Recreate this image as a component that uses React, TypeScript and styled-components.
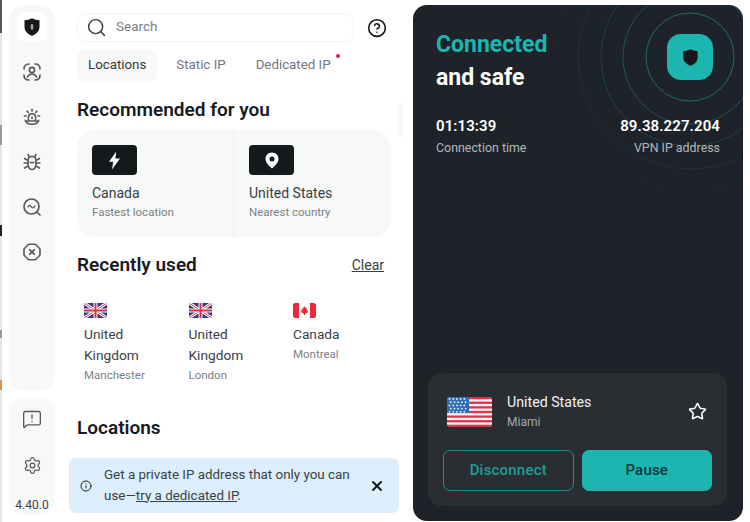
import { Search, CircleHelp, Info, X, Star, Settings, MessageSquareWarning } from "lucide-react";
import styled, { createGlobalStyle } from "styled-components";

const Global = createGlobalStyle`
	html, body {
		margin: 0;
		padding: 0;
		background: #fff;
	}
	body {
		font-family: Roboto, "Liberation Sans", sans-serif;
		color: #1a1e22;
	}
`;

const Page = styled.div`
	width: 750px;
	height: 522px;
	display: flex;
	overflow: hidden;
	background: #fff;
`;

// sliver of the window behind the app, visible along the left edge
const WindowEdge = styled.div`
	width: 2px;
	flex-shrink: 0;
	background: linear-gradient(
		to bottom,
		#555 0, #555 33px,
		#e4e4e4 33px, #e4e4e4 125px,
		#999 125px, #999 145px,
		#dfe8e4 145px, #e4e4e4 225px,
		#222 225px, #222 236px,
		#e4e4e4 236px, #e4e4e4 330px,
		#999 330px, #999 338px,
		#e4e4e4 338px, #e4e4e4 380px,
		#d9924f 380px, #d9924f 390px,
		#e4e4e4 390px
	);
`;

const Sidebar = styled.aside`
	width: 44px;
	margin: 5px 0 7px 8px;
	display: flex;
	flex-direction: column;
	gap: 8px;
	flex-shrink: 0;
`;

const SideCard = styled.div`
	background: #f7f8f8;
	border-radius: 14px;
	box-sizing: border-box;
	display: flex;
	flex-direction: column;
	align-items: center;
`;

const NavCard = styled(SideCard)`
	height: 385px;
	padding-top: 7px;
	gap: 15px;
`;

const FootCard = styled(SideCard)`
	flex: 1;
	padding-top: 10px;
	color: #3d4247;
`;

const NavItem = styled.div<{ $active?: boolean }>`
	width: 30px;
	height: 30px;
	border-radius: 8px;
	display: flex;
	align-items: center;
	justify-content: center;
	color: #55595e;
	background: ${(props) => (props.$active ? "#fff" : "transparent")};
`;

const FootIcon = styled.div`
	height: 22px;
	margin-bottom: 24px;
	display: flex;
	align-items: center;
	color: #55595e;
`;

const Version = styled.div`
	font-size: 12px;
	line-height: 14px;
	margin-top: -2px;
`;

const Main = styled.main`
	width: 336px;
	margin-left: 15px;
	flex-shrink: 0;
	position: relative;
	padding: 13px 0 0 8px;
	box-sizing: border-box;
	overflow: hidden;
`;

const ScrollThumb = styled.div`
	position: absolute;
	left: 329px;
	top: 103px;
	width: 5px;
	height: 34px;
	border-radius: 3px;
	background: #f7f7f7;
`;

const SearchRow = styled.div`
	display: flex;
	align-items: center;
	gap: 13px;
`;

const SearchBox = styled.div`
	width: 277px;
	height: 29px;
	box-sizing: border-box;
	border: 1px solid #f2f3f3;
	border-radius: 9px;
	display: flex;
	align-items: center;
	gap: 9px;
	padding-left: 8px;
	font-size: 13.5px;
	color: #7a7f84;
`;

const SearchLabel = styled.span`
	margin-top: -3px;
`;

const Tabs = styled.div`
	display: flex;
	margin-top: 8px;
	gap: 8px;
`;

const Tab = styled.div<{ $active?: boolean }>`
	height: 32px;
	padding: 0 11px 3px;
	box-sizing: border-box;
	border-radius: 8px;
	display: flex;
	align-items: center;
	position: relative;
	font-size: 13.3px;
	color: ${(props) => (props.$active ? "#33383d" : "#72777c")};
	background: ${(props) => (props.$active ? "#f7f8f8" : "transparent")};
`;

const Dot = styled.span`
	position: absolute;
	top: 4px;
	right: 2px;
	width: 4px;
	height: 4px;
	border-radius: 50%;
	background: #e0263f;
`;

const Heading = styled.h2`
	margin: 0;
	font-size: 19px;
	line-height: 24px;
	font-weight: 600;
	color: #171b1f;
`;

const RecommendedHeading = styled(Heading)`
	margin-top: 16px;
`;

const RecCard = styled.div`
	width: 314px;
	height: 107px;
	margin-top: 8px;
	background: #f7f8f8;
	border-radius: 18px;
	display: flex;
`;

const RecItem = styled.div`
	flex: 1;
	padding: 15px 0 0 15px;
	&:first-child {
		flex: none;
		width: 156px;
		box-sizing: border-box;
	}
	& + & {
		border-left: 1px solid #efefef;
	}
`;

const IconTile = styled.div`
	width: 45px;
	height: 30px;
	border-radius: 4px;
	background: #15191c;
	display: flex;
	align-items: center;
	justify-content: center;
`;

const Name = styled.div`
	font-size: 14px;
	line-height: 21px;
	color: #3a3f44;
`;

const Sub = styled.div`
	font-size: 11.5px;
	line-height: 20px;
	color: #7a7f84;
`;

const RecName = styled(Name)`
	margin-top: 8px;
`;

const RecSub = styled(Sub)`
	margin-top: -2px;
`;

const RecentHeader = styled.div`
	width: 307px;
	margin-top: 16px;
	display: flex;
	align-items: center;
	justify-content: space-between;
`;

const ClearLink = styled.a`
	font-size: 14px;
	color: #3a3f44;
	text-decoration: underline;
`;

const RecentRow = styled.div`
	display: flex;
	margin-top: 26px;
	padding-left: 7px;
`;

const RecentItem = styled.div`
	width: 104.5px;
	padding-right: 20px;
	box-sizing: border-box;
	svg {
		display: block;
	}
`;

const RecentName = styled(Name)`
	margin-top: 6px;
	font-size: 13.7px;
`;

const RecentSub = styled(Sub)`
	margin-top: -1px;
`;

const LocationsHeading = styled(Heading)`
	position: absolute;
	left: 8px;
	top: 416px;
`;

const Banner = styled.div`
	position: absolute;
	left: 0;
	top: 458px;
	width: 330px;
	height: 55px;
	box-sizing: border-box;
	background: #dceefb;
	border-radius: 7px;
	display: flex;
	align-items: center;
	padding-left: 11px;
	color: #3a3f44;
	font-size: 13.4px;
	line-height: 21px;
`;

const BannerInfo = styled.div`
	display: flex;
	color: #1f2428;
`;

const BannerText = styled.div`
	width: 252px;
	margin: -2px 0 0 12px;
	a {
		color: inherit;
		text-decoration: underline;
	}
`;

const BannerClose = styled.div`
	margin-left: 13px;
	display: flex;
	color: #14181b;
`;

const Panel = styled.section`
	width: 330px;
	height: 516px;
	margin: 5px 0 0 8px;
	flex-shrink: 0;
	box-sizing: border-box;
	border-radius: 14px;
	background: #1e2329;
	position: relative;
	overflow: hidden;
	padding: 23px 23px 0;
	color: #fff;
`;

const Rings = styled.svg`
	position: absolute;
	left: 0;
	top: 0;
`;

const ShieldTile = styled.div`
	position: absolute;
	left: 254px;
	top: 29px;
	width: 46px;
	height: 46px;
	border-radius: 14px;
	background: #1cb5b0;
	display: flex;
	align-items: center;
	justify-content: center;
`;

const Title = styled.div<{ $accent?: boolean }>`
	position: relative;
	font-size: 23px;
	line-height: 33px;
	font-weight: 700;
	color: ${(props) => (props.$accent ? "#1cb5b0" : "#fff")};
`;

const Stats = styled.div`
	position: relative;
	display: flex;
	justify-content: space-between;
	margin-top: 22px;
`;

const Stat = styled.div<{ $right?: boolean }>`
	text-align: ${(props) => (props.$right ? "right" : "left")};
`;

const StatValue = styled.div`
	font-size: 15px;
	line-height: 20px;
	font-weight: 600;
	letter-spacing: 0.1px;
`;

const StatLabel = styled.div`
	font-size: 12.4px;
	line-height: 20px;
	margin-top: 2px;
	color: #b4b8bc;
`;

const ConnectionCard = styled.div`
	position: absolute;
	left: 15px;
	right: 16px;
	bottom: 15px;
	height: 133px;
	box-sizing: border-box;
	background: #2a2e33;
	border-radius: 14px;
	padding: 19px 15px 0;
`;

const ConnectionRow = styled.div`
	display: flex;
	align-items: center;
	padding: 0 0 0 4px;
`;

const ConnectionText = styled.div`
	flex: 1;
	margin-left: 15px;
`;

const ConnectionName = styled.div`
	font-size: 14.2px;
	line-height: 21px;
	color: #f1f2f3;
`;

const ConnectionSub = styled.div`
	font-size: 12px;
	line-height: 18px;
	color: #a6aaae;
`;

const StarBox = styled.div`
	display: flex;
	margin-right: 5px;
`;

const Buttons = styled.div`
	display: flex;
	gap: 8px;
	margin-top: 19px;
`;

const Button = styled.button<{ $primary?: boolean }>`
	flex: 1;
	height: 41px;
	border-radius: 7px;
	font-family: inherit;
	font-size: 15px;
	font-weight: 500;
	letter-spacing: 0.2px;
	border: 1px solid #1f8f8c;
	padding: 0 0 2px;
	background: ${(props) => (props.$primary ? "#1cb5b0" : "transparent")};
	border-color: ${(props) => (props.$primary ? "#1cb5b0" : "#1f8f8c")};
	color: ${(props) => (props.$primary ? "#123338" : "#1f9e9b")};
`;

const ShieldIcon = ({ color, dot, size }: { color: string; dot?: string; size: number }) => (
	<svg width={size} height={size} viewBox="0 0 16 16">
		<path d="M8 1 C10 2 12 2.4 14 2.6 V8 C14 11.5 11 14 8 15 C5 14 2 11.5 2 8 V2.6 C4 2.4 6 2 8 1 Z" fill={color} />
		{dot && <rect x="7" y="5.6" width="2" height="4.6" rx="1" fill={dot} />}
	</svg>
);

const BoltIcon = () => (
	<svg width="13" height="19" viewBox="0 0 13 19">
		<path d="M8.2 0.5 L1 10.8 H5.2 L4 18.5 L12 7.6 H7.4 Z" fill="#fff" />
	</svg>
);

const PinIcon = () => (
	<svg width="14" height="17" viewBox="0 0 14 17">
		<path fillRule="evenodd" d="M7 0.5 C10.6 0.5 13.5 3.3 13.5 6.8 C13.5 10.6 9.8 14.2 7 16.5 C4.2 14.2 0.5 10.6 0.5 6.8 C0.5 3.3 3.4 0.5 7 0.5 Z M7 4.4 A2.5 2.5 0 1 0 7 9.4 A2.5 2.5 0 1 0 7 4.4 Z" fill="#fff" />
	</svg>
);

const FaceScanIcon = () => (
	<svg width="20" height="20" viewBox="0 0 20 20" fill="none" stroke="currentColor" strokeWidth="1.6" strokeLinecap="round">
		<path d="M2 7 C2 4 4 2 7 2" />
		<path d="M13 2 C16 2 18 4 18 7" />
		<path d="M2 13 C2 16 4 18 7 18" />
		<path d="M13 18 C16 18 18 16 18 13" />
		<circle cx="10" cy="8" r="2.6" />
		<path d="M5.5 15 C6.5 12.5 8 12 10 12 C12 12 13.5 12.5 14.5 15" />
	</svg>
);

const AlarmIcon = () => (
	<svg width="18" height="18" viewBox="0 0 20 20" fill="none" stroke="currentColor" strokeWidth="1.7" strokeLinecap="round">
		<path d="M6 14 V10.5 C6 8.2 7.8 6.5 10 6.5 C12.2 6.5 14 8.2 14 10.5 V14" />
		<path d="M2.5 13.5 C3 16.5 6 18 10 18 C14 18 17 16.5 17.5 13.5" />
		<path d="M4 14.5 H16" />
		<path d="M10 1.5 V3.5" />
		<path d="M4.5 3.5 L6 5" />
		<path d="M15.5 3.5 L14 5" />
		<path d="M1.5 9 H3.5" />
		<path d="M16.5 9 H18.5" />
		<path d="M10 10 V12" />
	</svg>
);

const BugIcon = () => (
	<svg width="20" height="20" viewBox="0 0 20 20" fill="none" stroke="currentColor" strokeWidth="1.5" strokeLinecap="round">
		<path d="M6 8 C6 5.5 7.8 4.5 10 4.5 C12.2 4.5 14 5.5 14 8 V12.5 C14 15 12.2 17.5 10 17.5 C7.8 17.5 6 15 6 12.5 Z" />
		<path d="M8 10.5 H12" />
		<path d="M7.5 5 L6 2.5" />
		<path d="M12.5 5 L14 2.5" />
		<path d="M6 8.5 L2.5 6.5" />
		<path d="M14 8.5 L17.5 6.5" />
		<path d="M6 11 H2" />
		<path d="M14 11 H18" />
		<path d="M6 14 L2.5 16" />
		<path d="M14 14 L17.5 16" />
	</svg>
);

const LookupIcon = () => (
	<svg width="20" height="20" viewBox="0 0 20 20" fill="none" stroke="currentColor" strokeWidth="1.7" strokeLinecap="round">
		<circle cx="9.5" cy="9.5" r="7.5" />
		<path d="M15 15 L18 18" />
		<path d="M6 10 C7 8 8 8 9.5 10 C11 12 12 10 13 9" strokeWidth="1.3" />
	</svg>
);

const BlockIcon = () => (
	<svg width="20" height="20" viewBox="0 0 20 20" fill="none" stroke="currentColor" strokeWidth="1.6" strokeLinecap="round" strokeLinejoin="round">
		<path d="M6.5 2.2 H13.5 L18 7 V13 L13.5 17.8 H6.5 L2 13 V7 Z" />
		<path d="M7.8 7.8 L12.2 12.2" strokeWidth="1.8" />
		<path d="M12.2 7.8 L7.8 12.2" strokeWidth="1.8" />
	</svg>
);

const UkFlag = ({ id }: { id: string }) => (
	<svg width="23" height="15" viewBox="0 0 23 15">
		<defs>
			<clipPath id={id}>
				<rect width="23" height="15" rx="2.5" />
			</clipPath>
		</defs>
		<g clipPath={`url(#${id})`}>
			<rect width="23" height="15" fill="#2a3a7c" />
			<path d="M0 0 L23 15 M23 0 L0 15" stroke="#fff" strokeWidth="3" />
			<path d="M0 0 L23 15 M23 0 L0 15" stroke="#d8304a" strokeWidth="1" />
			<path d="M11.5 0 V15 M0 7.5 H23" stroke="#fff" strokeWidth="4" />
			<path d="M11.5 0 V15 M0 7.5 H23" stroke="#d8304a" strokeWidth="2" />
		</g>
	</svg>
);

const CanadaFlag = () => (
	<svg width="23" height="15" viewBox="0 0 23 15">
		<defs>
			<clipPath id="ca-clip">
				<rect width="23" height="15" rx="2.5" />
			</clipPath>
		</defs>
		<g clipPath="url(#ca-clip)">
			<rect width="23" height="15" fill="#fff" />
			<rect width="6" height="15" fill="#ea2839" />
			<rect x="17" width="6" height="15" fill="#ea2839" />
			<path d="M11.5 3 L12.6 5.2 L14 4.8 L13.5 7.3 L15 7 L14.6 8.6 L15.2 9 L12.2 10.8 V12 H10.8 V10.8 L7.8 9 L8.4 8.6 L8 7 L9.5 7.3 L9 4.8 L10.4 5.2 Z" fill="#ea2839" />
		</g>
	</svg>
);

const UsFlag = () => {
	const stripes = [0, 2, 4, 6, 8, 10, 12];
	const stars: [number, number][] = [];
	for (let row = 0; row < 5; row++) {
		for (let col = 0; col < 5; col++) {
			stars.push([2.5 + col * 3.7 + (row % 2) * 1.3, 2 + row * 3.2]);
		}
	}
	return (
		<svg width="45" height="30" viewBox="0 0 45 30">
			<defs>
				<clipPath id="us-clip">
					<rect width="45" height="30" rx="4" />
				</clipPath>
			</defs>
			<g clipPath="url(#us-clip)">
				<rect width="45" height="30" fill="#f4f4f4" />
				{stripes.map((i) => (
					<rect key={i} y={(i * 30) / 13} width="45" height={30 / 13} fill="#e0334a" />
				))}
				<rect width="22" height="16" fill="#2f6fb8" />
				{stars.map(([x, y]) => (
					<circle key={`${x}-${y}`} cx={x} cy={y} r="0.9" fill="#e8f0fa" />
				))}
			</g>
		</svg>
	);
};

const RadarRings = () => {
	const rings = [
		{ r: 44, o: 0.6 },
		{ r: 67, o: 0.42 },
		{ r: 89, o: 0.26 },
		{ r: 112, o: 0.13 },
		{ r: 133, o: 0.05 },
	];
	return (
		<Rings width="330" height="516" fill="none">
			{rings.map((ring) => (
				<circle key={ring.r} cx="277" cy="52" r={ring.r} stroke="#1f9e93" strokeOpacity={ring.o} />
			))}
		</Rings>
	);
};

const recents = [
	{ id: "manchester", flag: <UkFlag id="uk-a" />, name: "United Kingdom", city: "Manchester" },
	{ id: "london", flag: <UkFlag id="uk-b" />, name: "United Kingdom", city: "London" },
	{ id: "montreal", flag: <CanadaFlag />, name: "Canada", city: "Montreal" },
];

const App = () => {
	return (
		<Page>
			<Global />
			<WindowEdge />
			<Sidebar>
				<NavCard>
					<NavItem $active>
						<ShieldIcon size={20} color="#14181b" dot="#9a9ea2" />
					</NavItem>
					<NavItem><FaceScanIcon /></NavItem>
					<NavItem><AlarmIcon /></NavItem>
					<NavItem><BugIcon /></NavItem>
					<NavItem><LookupIcon /></NavItem>
					<NavItem><BlockIcon /></NavItem>
				</NavCard>
				<FootCard>
					<FootIcon><MessageSquareWarning size={20} strokeWidth={1.6} /></FootIcon>
					<FootIcon><Settings size={19} strokeWidth={1.6} /></FootIcon>
					<Version>4.40.0</Version>
				</FootCard>
			</Sidebar>

			<Main>
				<SearchRow>
					<SearchBox>
						<Search size={21} strokeWidth={1.7} color="#3d4247" />
						<SearchLabel>Search</SearchLabel>
					</SearchBox>
					<CircleHelp size={20} strokeWidth={1.9} color="#14181b" />
				</SearchRow>
				<Tabs>
					<Tab $active>Locations</Tab>
					<Tab>Static IP</Tab>
					<Tab>
						Dedicated IP
						<Dot />
					</Tab>
				</Tabs>

				<RecommendedHeading>Recommended for you</RecommendedHeading>
				<RecCard>
					<RecItem>
						<IconTile><BoltIcon /></IconTile>
						<RecName>Canada</RecName>
						<RecSub>Fastest location</RecSub>
					</RecItem>
					<RecItem>
						<IconTile><PinIcon /></IconTile>
						<RecName>United States</RecName>
						<RecSub>Nearest country</RecSub>
					</RecItem>
				</RecCard>

				<RecentHeader>
					<Heading>Recently used</Heading>
					<ClearLink>Clear</ClearLink>
				</RecentHeader>
				<RecentRow>
					{recents.map((item) => (
						<RecentItem key={item.id}>
							{item.flag}
							<RecentName>{item.name}</RecentName>
							<RecentSub>{item.city}</RecentSub>
						</RecentItem>
					))}
				</RecentRow>

				<ScrollThumb />
				<LocationsHeading>Locations</LocationsHeading>
				<Banner>
					<BannerInfo><Info size={12} strokeWidth={2} /></BannerInfo>
					<BannerText>
						Get a private IP address that only you can use—<a>try a dedicated IP</a>.
					</BannerText>
					<BannerClose><X size={16} strokeWidth={2.8} /></BannerClose>
				</Banner>
			</Main>

			<Panel>
				<RadarRings />
				<ShieldTile>
					<ShieldIcon size={19} color="#14181b" />
				</ShieldTile>
				<Title $accent>Connected</Title>
				<Title>and safe</Title>
				<Stats>
					<Stat>
						<StatValue>01:13:39</StatValue>
						<StatLabel>Connection time</StatLabel>
					</Stat>
					<Stat $right>
						<StatValue>89.38.227.204</StatValue>
						<StatLabel>VPN IP address</StatLabel>
					</Stat>
				</Stats>
				<ConnectionCard>
					<ConnectionRow>
						<UsFlag />
						<ConnectionText>
							<ConnectionName>United States</ConnectionName>
							<ConnectionSub>Miami</ConnectionSub>
						</ConnectionText>
						<StarBox><Star size={19} strokeWidth={2} /></StarBox>
					</ConnectionRow>
					<Buttons>
						<Button>Disconnect</Button>
						<Button $primary>Pause</Button>
					</Buttons>
				</ConnectionCard>
			</Panel>
		</Page>
	);
};

export default App;
